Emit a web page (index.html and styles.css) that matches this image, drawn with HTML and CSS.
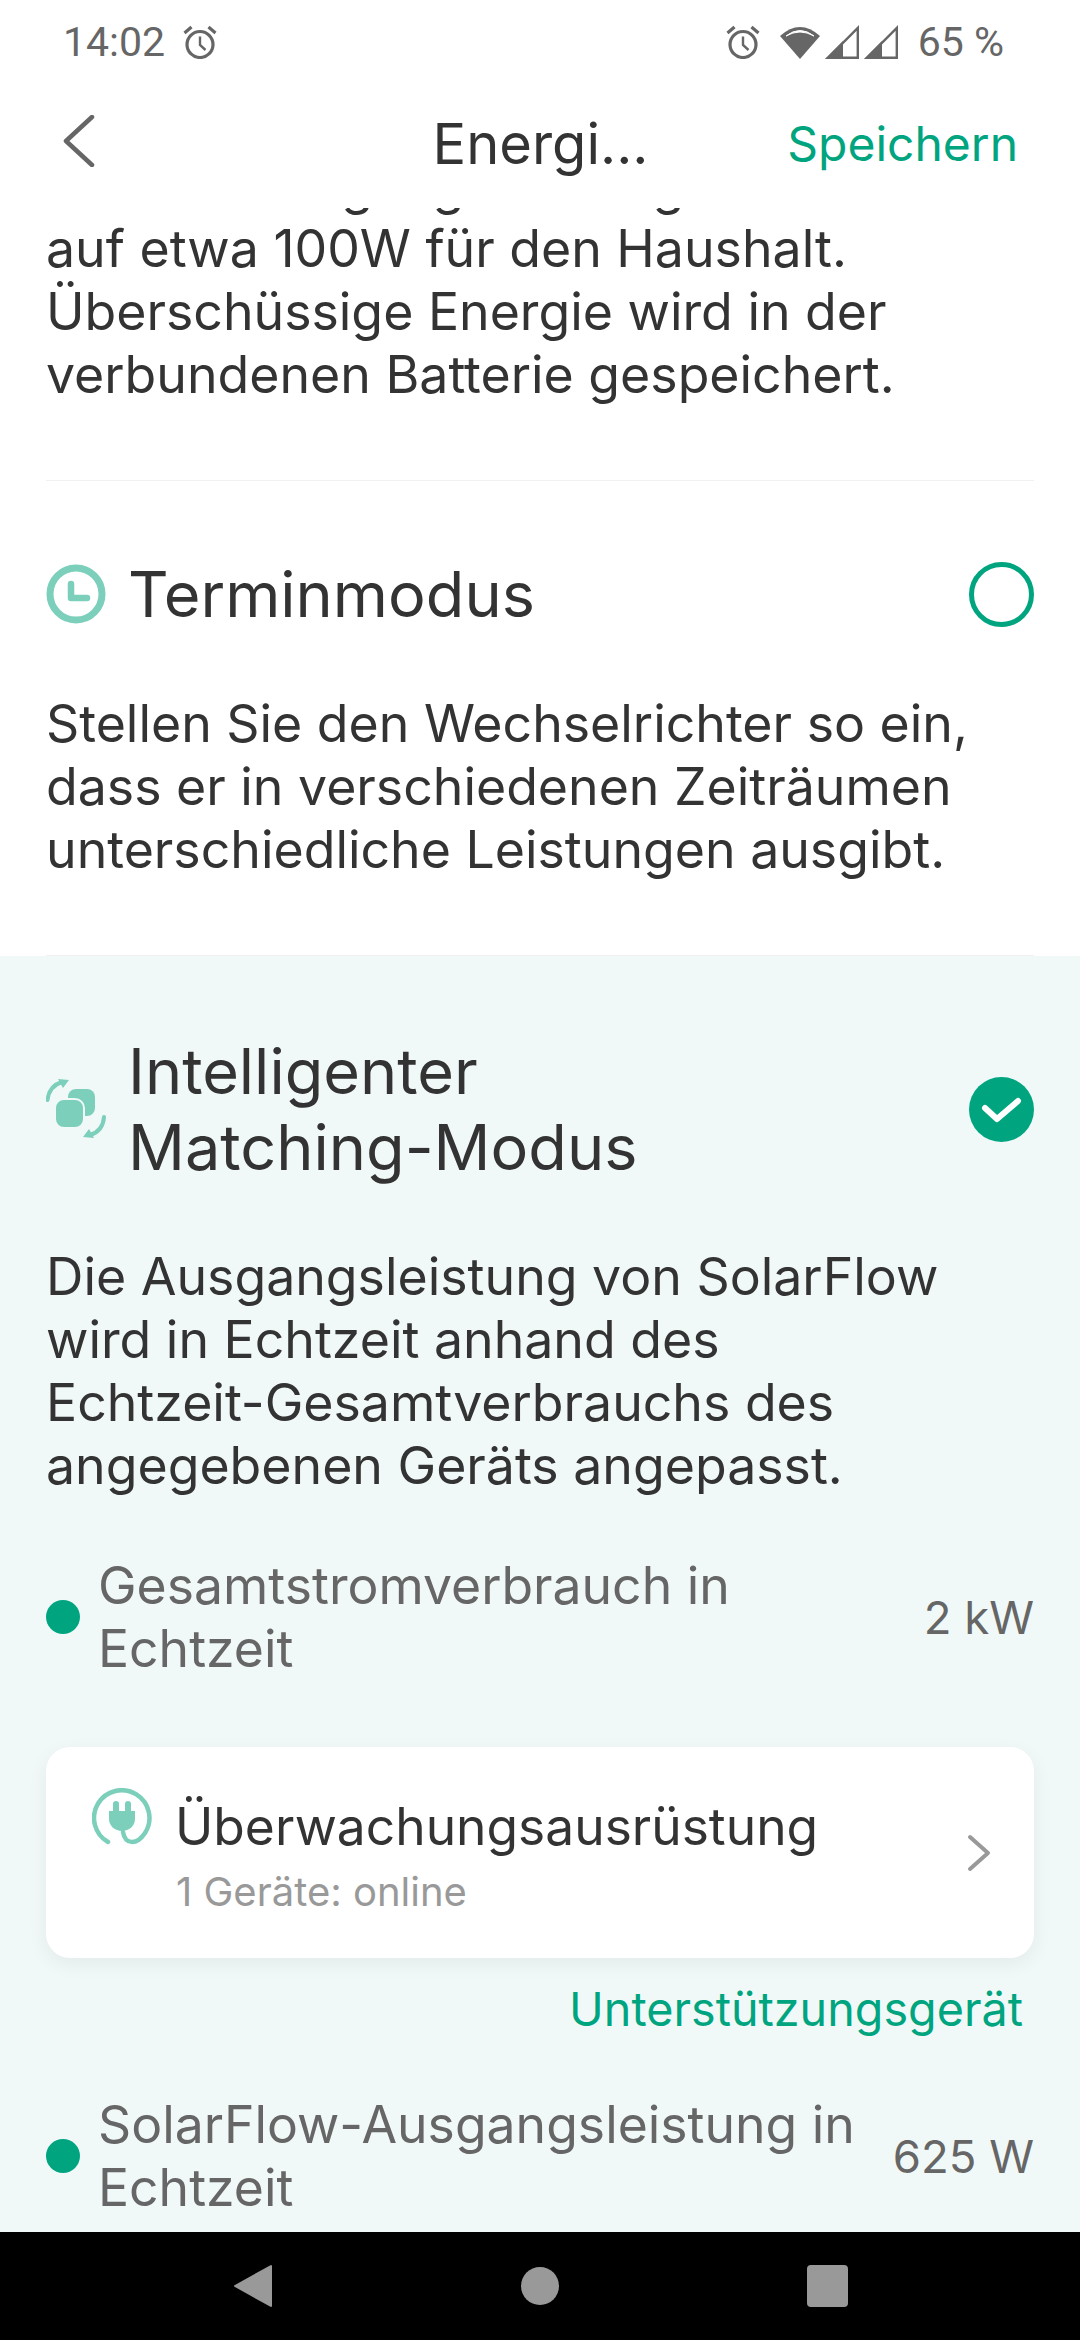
FILE: index.html
```html
<!DOCTYPE html>
<html lang="de">

<head>
    <meta charset="UTF-8">
    <meta name="viewport" content="width=device-width, initial-scale=1.0">
    <title>Energiemodus</title>
    <link rel="stylesheet" href="styles.css">
</head>

<body>

    <div class="screen">
        <!-- Status bar -->
        <div class="status-bar">
            <div class="status-group">
                <span>14:02</span>
                <svg class="alarm-icon" viewBox="0 0 34 34"><use href="#alarm"></use></svg>
            </div>
            <div class="status-group">
                <svg class="alarm-icon" viewBox="0 0 34 34">
                    <g id="alarm" fill="none" stroke="#666" stroke-width="3.2">
                        <circle cx="17" cy="19.5" r="13"></circle>
                        <path d="M17 11.5v8.5l5.5 5" stroke-width="2.4"></path>
                        <path d="M1.5 8l7-6M32.5 8l-7-6"></path>
                    </g>
                </svg>
                <svg class="wifi-icon" viewBox="0 0 40 34">
                    <path d="M0 11Q20-7 40 11L20 34Z" fill="#666"></path>
                    <path d="M6 11Q20 0 34 11Q20 3 6 11Z" fill="#fff" stroke="#fff" stroke-width="1"></path>
                </svg>
                <svg class="signal-icon" viewBox="0 0 34 34">
                    <path d="M3 32.8L32.8 3V32.8Z" fill="none" stroke="#666" stroke-width="2.4"></path>
                    <path d="M0 34L18 16V34Z" fill="#666"></path>
                </svg>
                <svg class="signal-icon" viewBox="0 0 34 34">
                    <path d="M3 32.8L32.8 3V32.8Z" fill="none" stroke="#666" stroke-width="2.4"></path>
                    <path d="M0 34L18 16V34Z" fill="#666"></path>
                </svg>
                <span class="battery">65 %</span>
            </div>
        </div>

        <!-- Header -->
        <header class="top-bar">
            <svg class="back-icon" viewBox="0 0 32 52">
                <path d="M29 2L3 26L29 50" fill="none" stroke="#666" stroke-width="4.5" stroke-linecap="round" stroke-linejoin="round"></path>
            </svg>
            <h1>Energi...</h1>
            <a class="save-link">Speichern</a>
        </header>

        <!-- Scrolled list of modes -->
        <main class="mode-list">
            <div class="scroll-offset">
                <section class="mode">
                    <p class="mode-text">Hält die Ausgangsleistung<br>auf etwa 100W für den Haushalt.<br>Überschüssige Energie wird in der<br>verbundenen Batterie gespeichert.</p>
                </section>

                <section class="mode">
                    <div class="mode-head">
                        <svg class="mode-icon" viewBox="0 0 60 60">
                            <circle cx="30" cy="30" r="26" fill="none" stroke="#7ccfbb" stroke-width="7"></circle>
                            <path d="M25 20V34H41" fill="none" stroke="#7ccfbb" stroke-width="6.5" stroke-linecap="round" stroke-linejoin="round"></path>
                        </svg>
                        <h2>Terminmodus</h2>
                        <span class="radio"></span>
                    </div>
                    <p class="mode-text">Stellen Sie den Wechselrichter so ein, dass er in verschiedenen Zeiträumen unterschiedliche Leistungen ausgibt.</p>
                </section>

                <section class="mode mode-active">
                    <div class="mode-head">
                        <svg class="mode-icon" viewBox="0 0 60 60">
                            <rect x="22" y="10" width="27" height="27" rx="8" fill="#7ccfbb"></rect>
                            <rect x="9" y="20" width="29" height="29" rx="9" fill="#7ccfbb" stroke="#f0f9f8" stroke-width="2"></rect>
                            <path d="M1.5 21Q3 7 16 3" fill="none" stroke="#7ccfbb" stroke-width="4" stroke-linecap="round"></path>
                            <path d="M12 0L23 1L17 9Z" fill="#7ccfbb"></path>
                            <path d="M58 38Q57 52 44 56" fill="none" stroke="#7ccfbb" stroke-width="4" stroke-linecap="round"></path>
                            <path d="M48 59L37 58L43 50Z" fill="#7ccfbb"></path>
                        </svg>
                        <h2>Intelligenter<br>Matching-Modus</h2>
                        <svg class="check-icon" viewBox="0 0 65 65">
                            <circle cx="32.5" cy="32.5" r="32.5" fill="#00a580"></circle>
                            <path d="M16 31L28 42L49 24" fill="none" stroke="#fff" stroke-width="6" stroke-linecap="round" stroke-linejoin="round"></path>
                        </svg>
                    </div>
                    <p class="mode-text">Die Ausgangsleistung von SolarFlow wird in Echtzeit anhand des<br>Echtzeit-Gesamtverbrauchs des angegebenen Geräts angepasst.</p>

                    <div class="reading reading-first">
                        <span class="dot"></span>
                        <span class="reading-label">Gesamtstromverbrauch in Echtzeit</span>
                        <span class="reading-value">2 kW</span>
                    </div>

                    <div class="device-card">
                        <svg class="plug-icon" viewBox="0 0 60 60">
                            <path d="M16 54A27.7 27.7 0 1 1 53 45C49 51 44 54 40 54C35 54 32 50 31 44" fill="none" stroke="#7ccfbb" stroke-width="4.5" stroke-linecap="round"></path>
                            <path d="M17 23H43V31C43 38 37 43 30 43C23 43 17 38 17 31Z" fill="#7ccfbb"></path>
                            <path d="M24 16V25M36 16V25" stroke="#7ccfbb" stroke-width="6" stroke-linecap="round"></path>
                        </svg>
                        <div class="device-info">
                            <div class="device-name">Überwachungsausrüstung</div>
                            <div class="device-status">1 Geräte: online</div>
                        </div>
                        <svg class="chevron-icon" viewBox="0 0 26 38">
                            <path d="M4 3L22 19L4 35" fill="none" stroke="#999" stroke-width="4" stroke-linecap="round" stroke-linejoin="round"></path>
                        </svg>
                    </div>

                    <a class="support-link">Unterstützungsgerät</a>

                    <div class="reading">
                        <span class="dot"></span>
                        <span class="reading-label">SolarFlow-Ausgangsleistung in Echtzeit</span>
                        <span class="reading-value">625 W</span>
                    </div>
                </section>
            </div>
        </main>

        <!-- Android navigation bar -->
        <nav class="nav-bar">
            <svg class="nav-icon" viewBox="0 0 40 44"><path d="M38 2V42L2 22Z" fill="#999" stroke="#999" stroke-width="2" stroke-linejoin="round"></path></svg>
            <span class="nav-home"></span>
            <span class="nav-recent"></span>
        </nav>
    </div>

</body>

</html>
```

FILE: styles.css
```css
/* Resetting some default styles */
* {
    margin: 0;
    padding: 0;
    box-sizing: border-box;
}

body {
    font-family: 'Inter', 'Liberation Sans', sans-serif;
    background-color: #fff;
    color: #333;
}

.screen {
    width: 1080px;
    height: 2340px;
    display: flex;
    flex-direction: column;
    overflow: hidden;
}

/* Status bar */
.status-bar {
    height: 84px;
    padding: 0 76px 0 63px;
    display: flex;
    justify-content: space-between;
    align-items: center;
    font-family: 'Roboto', sans-serif;
    font-size: 41px;
    color: #666;
    flex-shrink: 0;
}

.status-group {
    display: flex;
    align-items: center;
    gap: 5px;
}

.status-group > span:first-child {
    margin-right: 13px;
}

.alarm-icon {
    width: 34px;
    height: 34px;
}

.wifi-icon {
    width: 40px;
    height: 34px;
    margin-left: 15px;
}

.signal-icon {
    width: 34px;
    height: 34px;
}

.battery {
    margin-left: 15px;
}

/* Header */
.top-bar {
    height: 124px;
    display: grid;
    grid-template-columns: 1fr auto 1fr;
    align-items: center;
    padding: 0 62px 5px 63px;
    flex-shrink: 0;
    background-color: #fff;
}

.back-icon {
    width: 32px;
    height: 52px;
    margin-bottom: 6px;
}

.top-bar h1 {
    font-size: 56px;
    font-weight: 400;
}

.save-link {
    font-size: 48px;
    color: #00a580;
    justify-self: end;
}

/* List of modes */
.mode-list {
    flex: 1;
    overflow: hidden;
}

.scroll-offset {
    margin-top: -54px;
}

.mode {
    margin: 0 46px;
    padding-bottom: 74px;
    border-bottom: 1px solid #f1f1f1;
}

.mode-active {
    margin: 0;
    padding: 77px 46px 40px;
    background-color: #f0f9f8;
    border-bottom: none;
}

.mode-head {
    display: flex;
    align-items: center;
    margin-top: 75px;
    margin-bottom: 60px;
}

.mode-active .mode-head {
    margin-top: 0;
    margin-bottom: 60px;
}

.mode-head h2 {
    flex: 1;
    font-size: 63px;
    font-weight: 400;
    line-height: 76px;
    margin-left: 22px;
}

.mode-icon {
    width: 60px;
    height: 60px;
    flex-shrink: 0;
}

.radio {
    width: 65px;
    height: 65px;
    border: 5px solid #00a580;
    border-radius: 50%;
    flex-shrink: 0;
}

.check-icon {
    width: 65px;
    height: 65px;
    flex-shrink: 0;
}

.mode-text {
    font-size: 51.8px;
    line-height: 63px;
}

/* Readings */
.reading {
    display: flex;
    align-items: center;
    color: #666;
    font-size: 51.7px;
    line-height: 63px;
    margin-top: 52px;
}

.reading-first {
    margin-top: 57px;
}

.dot {
    width: 34px;
    height: 34px;
    border-radius: 50%;
    background-color: #00a580;
    flex-shrink: 0;
    margin-right: 18px;
}

.reading-label {
    flex: 1;
}

.reading-value {
    flex-shrink: 0;
    font-size: 45.5px;
    margin-left: 24px;
}

/* Device card */
.device-card {
    height: 211px;
    margin-top: 67px;
    padding: 0 42px 0 46px;
    display: flex;
    align-items: center;
    background-color: #fff;
    border-radius: 24px;
    box-shadow: 0 6px 20px rgba(0, 0, 0, 0.06);
}

.plug-icon {
    width: 60px;
    height: 60px;
    margin-right: 23px;
    align-self: flex-start;
    margin-top: 41px;
    flex-shrink: 0;
}

.device-info {
    flex: 1;
    margin-top: 6px;
}

.device-name {
    font-size: 51.5px;
    line-height: 64px;
}

.device-status {
    font-size: 40px;
    line-height: 50px;
    color: #999;
    margin-top: 9px;
    margin-left: 1px;
}

.chevron-icon {
    width: 26px;
    height: 38px;
}

.support-link {
    display: block;
    text-align: right;
    font-size: 46.7px;
    line-height: 63px;
    color: #00a580;
    margin: 20px 11px 0 0;
}

/* Navigation bar */
.nav-bar {
    height: 108px;
    background-color: #000;
    display: flex;
    align-items: center;
    justify-content: space-between;
    padding: 0 232px 0 233px;
    flex-shrink: 0;
}

.nav-icon {
    width: 40px;
    height: 44px;
}

.nav-home {
    width: 38px;
    height: 38px;
    border-radius: 50%;
    background-color: #999;
}

.nav-recent {
    width: 41px;
    height: 42px;
    border-radius: 4px;
    background-color: #999;
}
```
